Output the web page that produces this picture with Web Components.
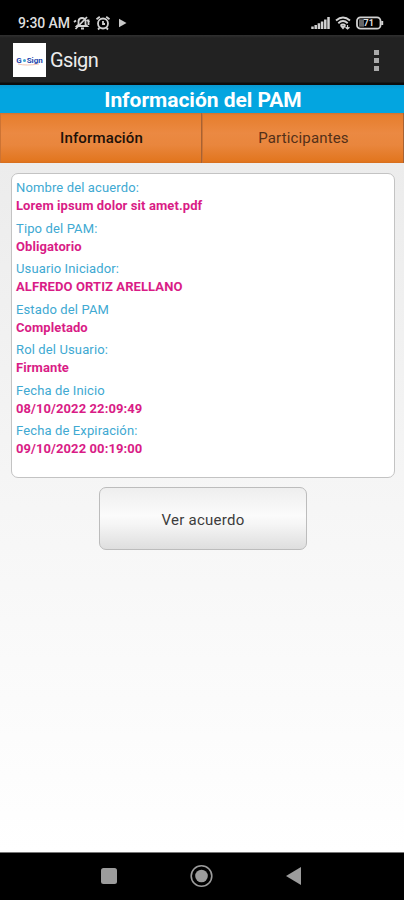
<!DOCTYPE html>
<html lang="es">
<head>
<meta charset="utf-8">
<meta name="viewport" content="width=device-width, initial-scale=1">
<title>Gsign</title>
<style>
  body {
    margin: 0;
    font-family: Roboto, "Liberation Sans", sans-serif;
  }
</style>
</head>
<body>
<pam-screen></pam-screen>

<script>
(function () {
  function define(name, html) {
    const template = document.createElement("template");
    template.innerHTML = html;

    window.customElements.define(
      name,
      class extends HTMLElement {
        constructor() {
          super();

          this.attachShadow({ mode: "open" });
          this.shadowRoot.appendChild(template.content.cloneNode(true));
        }
      }
    );
  }

  define("status-bar", `
    <style>
      :host {
        display: flex;
        align-items: center;
        box-sizing: border-box;
        height: 35px;
        padding: 11px 20px 0 18px;
        background: #000;
        color: #dedede;
        font-size: 14px;
        font-weight: 500;
      }
      svg {
        display: block;
        fill: none;
        stroke: #d2d2d2;
      }
      .time {
        width: 55px;
        white-space: nowrap;
        letter-spacing: -0.1px;
      }
      .alarm {
        margin-left: 4px;
      }
      .play {
        margin-left: 7px;
      }
      .signal {
        margin-left: auto;
      }
      .wifi {
        margin: 0 5px 0 5px;
      }
      .battery text {
        fill: #dedede;
        stroke: none;
        font-size: 9px;
        font-weight: 700;
      }
    </style>
    <span class="time">9:30 AM</span>
    <svg width="18" height="16" viewBox="0 0 18 16" stroke-width="1.8">
      <path d="M4 11 L5.5 9.5 V6 Q6 3 9 3 Q12 3 12.5 6 V9.5 L14 11 Z M8 13.5 H11" />
      <path d="M2.5 14 L14 2 M1 7 L3 5.5 M13.5 5 L16.5 7 M15.5 4.5 V10" />
    </svg>
    <svg class="alarm" width="16" height="16" viewBox="0 0 16 16" stroke-width="1.8">
      <circle cx="8" cy="8.5" r="5" />
      <path d="M1.5 4.3 L4.8 1.8 M11.2 1.8 L14.5 4.3 M8 6 V9 H10 M4.5 13 L3 14.5 M11.5 13 L13 14.5" />
    </svg>
    <svg class="play" width="9" height="10" viewBox="0 0 9 10">
      <path d="M1 0.8 L8.5 5 L1 9.2 Z" fill="#c8c8c8" stroke="none" />
    </svg>
    <svg class="signal" width="19" height="14" viewBox="0 0 19 14" stroke-width="2.5">
      <path d="M1.5 13 V10.5 M4.7 13 V9 M7.9 13 V7.3 M11.1 13 V5.5 M14.3 13 V3.5 M17.5 13 V1" />
    </svg>
    <svg class="wifi" width="16" height="14" viewBox="0 0 16 14" stroke-width="1.9">
      <path d="M1 4.5 Q8 -1.5 15 4.5 M3.3 7.2 Q8 3 12.7 7.2 M5.5 9.6 Q8 7.4 10.5 9.6" />
      <path d="M6.2 10.3 L8 12.5 L9.8 10.3 Z M12.5 9 V13 M10.5 11.3 L12.5 13 L14.5 11.3" fill="#d2d2d2" stroke-width="1.2" />
    </svg>
    <svg class="battery" width="28" height="14" viewBox="0 0 28 14" stroke-width="1.8">
      <rect x="1" y="1.3" width="23.5" height="11.4" rx="3.5" />
      <path d="M26.2 5 V9" stroke-width="2" />
      <path d="M3 3.3 H8 V10.7 H3 Z" fill="#666" stroke="none" />
      <text x="7.6" y="10.3">71</text>
    </svg>
  `);

  define("app-bar", `
    <style>
      :host {
        display: flex;
        align-items: center;
        box-sizing: border-box;
        height: 50px;
        padding: 0 25px 0 13px;
        background: linear-gradient(#303030, #222 3px, #222 47px, #0c0c0c 48px);
        color: #ececec;
      }
      .logo {
        display: flex;
        align-items: center;
        justify-content: center;
        position: relative;
        width: 33px;
        height: 34px;
        background: #fff;
        color: #2445ae;
        font-size: 8px;
        font-weight: 700;
      }
      .logo i {
        width: 3px;
        height: 3px;
        margin: 0 1px;
        border-radius: 50%;
        background: #42a8cf;
      }
      .logo svg {
        position: absolute;
        left: 5px;
        top: 20px;
      }
      .name {
        margin-left: 4px;
        font-size: 20px;
        letter-spacing: -0.6px;
      }
      .more {
        display: grid;
        gap: 3px;
        margin-left: auto;
      }
      .more i {
        width: 5px;
        height: 5px;
        background: #aaa;
      }
    </style>
    <div class="logo">
      <span>G</span><i></i><span>Sign</span>
      <svg width="22" height="3" viewBox="0 0 22 3"><path d="M0 1 Q8 3 21 1" fill="none" stroke="#f2c4b4" /></svg>
    </div>
    <span class="name"><slot></slot></span>
    <div class="more"><i></i><i></i><i></i></div>
  `);

  define("page-title", `
    <style>
      :host {
        display: block;
        box-sizing: border-box;
        height: 28px;
        padding-left: 2px;
        background: linear-gradient(#0a98d0, #03a5e0 5px, #03a5e0);
        color: #fff;
        font-size: 21px;
        font-weight: 700;
        line-height: 31px;
        letter-spacing: -0.03px;
        text-align: center;
      }
    </style>
    <slot></slot>
  `);

  define("tab-item", `
    <style>
      :host {
        display: block;
        flex: 1;
        box-sizing: border-box;
        border-right: 1px solid #a76233;
        border-left: 1px solid #cc7334;
        background: linear-gradient(#cd7232, #e67e2d 2px, #eb8942 20px, #e9863d 32px, #e2761f 48px, #d66d1d);
        color: #533018;
        font-size: 15px;
        line-height: 51px;
        text-align: center;
        text-indent: 1px;
        letter-spacing: 0.15px;
      }
      :host([selected]) {
        color: #201008;
        font-weight: 500;
      }
    </style>
    <slot></slot>
  `);

  define("tab-strip", `
    <style>
      :host {
        display: flex;
        height: 50px;
      }
    </style>
    <slot></slot>
  `);

  define("info-card", `
    <style>
      :host {
        display: block;
        box-sizing: border-box;
        height: 305px;
        padding: 5px 4px;
        border: 1px solid #c3c3c3;
        border-radius: 7px;
        background: #fff;
      }
    </style>
    <slot></slot>
  `);

  define("info-field", `
    <style>
      :host {
        display: block;
        height: 40.5px;
        font-size: 13px;
        line-height: 18px;
        white-space: nowrap;
      }
      .label {
        color: #40a9d2;
        letter-spacing: 0.13px;
      }
      .value {
        color: #d91c86;
        font-weight: 700;
        letter-spacing: 0.09px;
      }
    </style>
    <div class="label"><slot name="label"></slot></div>
    <div class="value"><slot></slot></div>
  `);

  define("action-button", `
    <style>
      :host {
        display: block;
        width: 208px;
        margin: 9px auto 0;
      }
      button {
        display: block;
        width: 100%;
        height: 63px;
        padding: 2px 0 0;
        border: 1px solid #bcbcbc;
        border-radius: 7px;
        background: linear-gradient(#eee, #fbfbfb 45%, #f5f5f5 60%, #dedede);
        color: #3c3c3c;
        font: 15px Roboto, "Liberation Sans", sans-serif;
        letter-spacing: 0.25px;
      }
    </style>
    <button type="button"><slot></slot></button>
  `);

  define("nav-bar", `
    <style>
      :host {
        display: flex;
        align-items: center;
        justify-content: space-between;
        box-sizing: border-box;
        height: 48px;
        padding: 0 102px 1px 100px;
        border-top: 1px solid #777;
        background: #000;
      }
      svg {
        display: block;
        fill: #9c9c9c;
      }
    </style>
    <svg width="18" height="18"><rect x="1" y="1" width="16" height="16" rx="2.5" /></svg>
    <svg width="24" height="24">
      <circle cx="11.5" cy="12" r="10.3" fill="none" stroke="#9c9c9c" stroke-width="1.6" />
      <circle cx="11.5" cy="12" r="6.3" />
    </svg>
    <svg width="17" height="20"><path d="M1 10 L16 1 V19 Z" /></svg>
  `);

  define("pam-screen", `
    <style>
      :host {
        display: flex;
        flex-direction: column;
        height: 900px;
        overflow: hidden;
      }
      main {
        flex: 1;
        padding: 10px 9px 0 11px;
        background: linear-gradient(#ececec, #f6f6f6 50%, #fff);
      }
    </style>
    <status-bar></status-bar>
    <app-bar>Gsign</app-bar>
    <page-title>Información del PAM</page-title>
    <tab-strip>
      <tab-item selected>Información</tab-item>
      <tab-item>Participantes</tab-item>
    </tab-strip>
    <main>
      <info-card>
        <info-field><span slot="label">Nombre del acuerdo:</span>Lorem ipsum dolor sit amet.pdf</info-field>
        <info-field><span slot="label">Tipo del PAM:</span>Obligatorio</info-field>
        <info-field><span slot="label">Usuario Iniciador:</span>ALFREDO ORTIZ ARELLANO</info-field>
        <info-field><span slot="label">Estado del PAM</span>Completado</info-field>
        <info-field><span slot="label">Rol del Usuario:</span>Firmante</info-field>
        <info-field><span slot="label">Fecha de Inicio</span>08/10/2022 22:09:49</info-field>
        <info-field><span slot="label">Fecha de Expiración:</span>09/10/2022 00:19:00</info-field>
      </info-card>
      <action-button>Ver acuerdo</action-button>
    </main>
    <nav-bar></nav-bar>
  `);
})();
</script>
</body>
</html>
